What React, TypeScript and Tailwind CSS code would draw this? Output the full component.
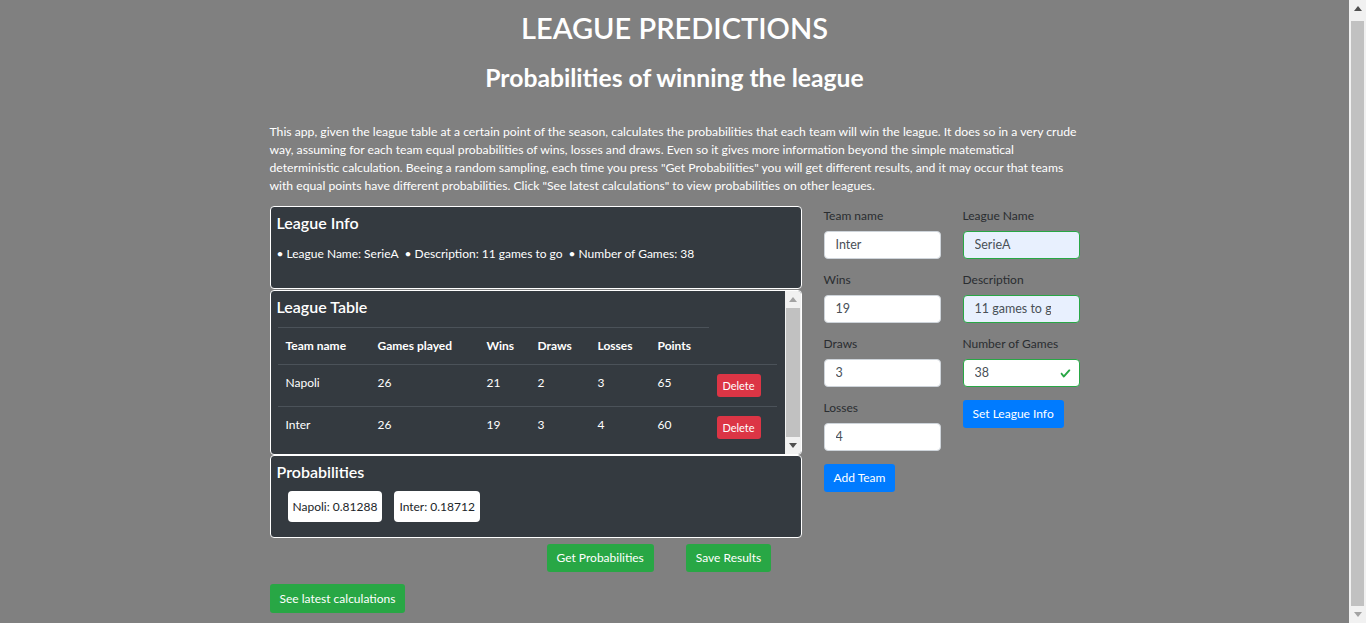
import React from 'react';

interface Team {
    name: string;
    played: number;
    wins: number;
    draws: number;
    losses: number;
    points: number;
}

const teams: Team[] = [
    { name: 'Napoli', played: 26, wins: 21, draws: 2, losses: 3, points: 65 },
    { name: 'Inter', played: 26, wins: 19, draws: 3, losses: 4, points: 60 },
];

const probabilities = [
    { name: 'Napoli', value: '0.81288' },
    { name: 'Inter', value: '0.18712' },
];

const cols = ['w-[92px]', 'w-[109px]', 'w-[51px]', 'w-[60px]', 'w-[60px]', 'w-[59px]'];

const Arrow: React.FC<{ up?: boolean; color: string }> = ({ up, color }) => (
    <div className="flex h-[17px] items-center justify-center">
        <svg width="8" height="5" viewBox="0 0 8 5">
            <polygon fill={color} points={up ? '0,5 4,0 8,5' : '0,0 8,0 4,5'} />
        </svg>
    </div>
);

const Field: React.FC<{ label: string; value: string; variant?: 'plain' | 'filled' | 'valid' }> = ({ label, value, variant = 'plain' }) => {
    const box =
        variant === 'filled'
            ? 'border-[#28a745] bg-[#e8f0fe] pr-[28px]'
            : variant === 'valid'
                ? 'border-[#28a745] bg-white pr-[28px]'
                : 'border-[#ced4da] bg-white pr-[4px]';
    return (
        <div className="mb-[12px]">
            <div className="text-[12px] leading-[18px] text-[#2a2d30] mb-[6px]">{label}</div>
            <div className={`relative flex h-[28px] w-[117px] items-center rounded-[4px] border pl-[11px] ${box}`}>
                <span className="min-w-0 flex-1 overflow-hidden whitespace-nowrap text-[12.5px] text-[#495057]">{value}</span>
                {variant === 'valid' && (
                    <svg className="absolute right-[7px] top-[8px]" width="13" height="11" viewBox="0 0 8 8">
                        <path fill="#28a745" d="M2.3 6.73L.6 4.53c-.4-1.04.46-1.4 1.1-.8l1.1 1.4 3.4-3.8c.6-.63 1.6-.27 1.2.7l-4 4.6c-.43.5-.8.4-1.1.1z" />
                    </svg>
                )}
            </div>
        </div>
    );
};

const App: React.FC = () => {
    return (
        <div className="flex h-screen bg-[#808080] font-['Lato','Open_Sans',sans-serif]">
            <div className="min-w-0 flex-1 overflow-hidden">
                <div className="mx-auto w-[810px] pb-[20px]">
                    <h1 className="pt-[10px] text-center text-[29px] leading-[36px] font-semibold text-white">LEAGUE PREDICTIONS</h1>
                    <h3 className="mt-[17px] text-center text-[24.7px] leading-[30px] font-bold text-white">Probabilities of winning the league</h3>
                    <p className="mt-[30px] text-[12.2px] leading-[18px] text-white">
                        This app, given the league table at a certain point of the season, calculates the probabilities that each team will win the league. It does so in a very crude way, assuming for each team equal probabilities of wins, losses and draws. Even so it gives more information beyond the simple matematical deterministic calculation. Beeing a random sampling, each time you press "Get Probabilities" you will get different results, and it may occur that teams with equal points have different probabilities. Click "See latest calculations" to view probabilities on other leagues.
                    </p>

                    <div className="mt-[11px] flex">
                        <div className="w-[532px]">
                            <div className="h-[83px] rounded-[4px] border border-white bg-[#343a40] px-[6px] pt-[5px]">
                                <h5 className="text-[16px] leading-[22px] font-semibold text-white">League Info</h5>
                                <ul className="mt-[11px] flex gap-[6px] text-[12px] leading-[18px] text-white">
                                    <li>• League Name: SerieA</li>
                                    <li>• Description: 11 games to go</li>
                                    <li>• Number of Games: 38</li>
                                </ul>
                            </div>

                            <div className="mt-[1px] flex h-[165px] overflow-hidden rounded-[4px] border border-white bg-[#343a40]">
                                <div className="min-w-0 flex-1 pl-[6px] pt-[5px]">
                                    <h5 className="text-[16px] leading-[22px] font-semibold text-white">League Table</h5>
                                    <div className="mt-[9px] w-[500px] pl-[1px] text-[12px] leading-[18px] text-white">
                                        <div className="flex h-[37px] w-[431px] items-center border-t border-[#4b5259] font-bold">
                                            {['Team name', 'Games played', 'Wins', 'Draws', 'Losses', 'Points'].map((h, i) => (
                                                <div key={h} className={`${cols[i]} pl-[8px]`}>{h}</div>
                                            ))}
                                        </div>
                                        {teams.map((t) => (
                                            <div key={t.name} className="flex h-[42px] items-start border-t border-[#4b5259] pt-[9px]">
                                                {[t.name, t.played, t.wins, t.draws, t.losses, t.points].map((v, i) => (
                                                    <div key={i} className={`${cols[i]} pl-[8px]`}>{v}</div>
                                                ))}
                                                <div className="pl-[8px]">
                                                    <button className="h-[23px] w-[44px] rounded-[3px] bg-[#dc3545] text-[11px] text-white">Delete</button>
                                                </div>
                                            </div>
                                        ))}
                                    </div>
                                </div>
                                <div className="flex w-[16px] flex-col bg-[#f1f1f1]">
                                    <Arrow up color="#a3a3a3" />
                                    <div className="mx-[1px] h-[130px] bg-[#c1c1c1]" />
                                    <div className="flex-1" />
                                    <Arrow color="#505050" />
                                </div>
                            </div>

                            <div className="h-[83px] rounded-[4px] border border-white bg-[#343a40] px-[6px] pt-[5px]">
                                <h5 className="text-[16px] leading-[22px] font-semibold text-white">Probabilities</h5>
                                <div className="mt-[8px] flex gap-[12px] pl-[11px]">
                                    {probabilities.map((p) => (
                                        <div key={p.name} className="flex h-[31px] items-center rounded-[4px] bg-white px-[5px] text-[12px] text-[#212529]">
                                            {p.name}: {p.value}
                                        </div>
                                    ))}
                                </div>
                            </div>

                            <div className="mt-[6px] flex gap-[32px] pl-[277px]">
                                <button className="h-[28px] rounded-[3px] bg-[#28a745] px-[10px] text-[12px] text-white">Get Probabilities</button>
                                <button className="h-[28px] rounded-[3px] bg-[#28a745] px-[10px] text-[12px] text-white">Save Results</button>
                            </div>
                        </div>

                        <div className="ml-[22px] flex gap-[22px] pt-[1px]">
                            <div>
                                <Field label="Team name" value="Inter" />
                                <Field label="Wins" value="19" />
                                <Field label="Draws" value="3" />
                                <Field label="Losses" value="4" />
                                <button className="mt-[1px] h-[28px] rounded-[3px] bg-[#007bff] px-[10px] text-[12px] text-white">Add Team</button>
                            </div>
                            <div>
                                <Field label="League Name" value="SerieA" variant="filled" />
                                <Field label="Description" value="11 games to go" variant="filled" />
                                <Field label="Number of Games" value="38" variant="valid" />
                                <button className="mt-[1px] h-[28px] rounded-[3px] bg-[#007bff] px-[10px] text-[12px] text-white">Set League Info</button>
                            </div>
                        </div>
                    </div>

                    <button className="mt-[12px] h-[29px] rounded-[3px] bg-[#28a745] px-[10px] text-[12px] text-white">See latest calculations</button>
                </div>
            </div>

            <div className="flex w-[17px] flex-col bg-[#f1f1f1]">
                <Arrow up color="#505050" />
                <div className="mx-[2px] mt-[4px] flex-1 bg-[#c1c1c1]" />
                <Arrow color="#a3a3a3" />
            </div>
        </div>
    );
};

export default App;
